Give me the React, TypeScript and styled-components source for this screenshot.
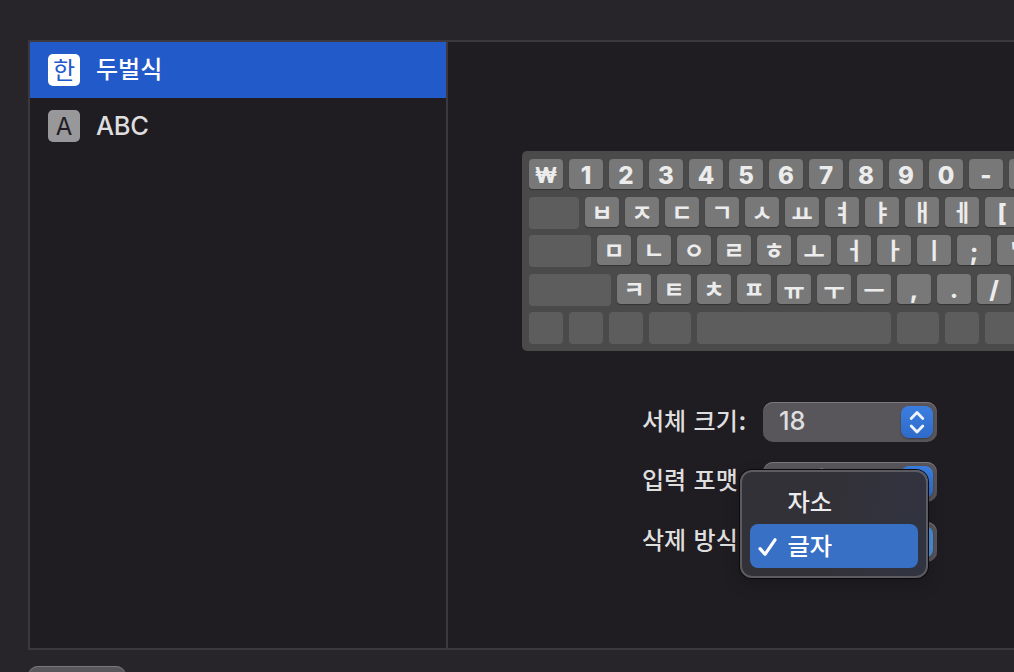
import React from "react";
import styled, { createGlobalStyle } from "styled-components";

const ROWS = [
  {
    lead: 0,
    keys: ["₩", "1", "2", "3", "4", "5", "6", "7", "8", "9", "0", "-", "="],
  },
  {
    lead: 50,
    keys: ["ㅂ", "ㅈ", "ㄷ", "ㄱ", "ㅅ", "ㅛ", "ㅕ", "ㅑ", "ㅐ", "ㅔ", "["],
  },
  {
    lead: 62,
    keys: ["ㅁ", "ㄴ", "ㅇ", "ㄹ", "ㅎ", "ㅗ", "ㅓ", "ㅏ", "ㅣ", ";", "'"],
  },
  {
    lead: 82,
    keys: ["ㅋ", "ㅌ", "ㅊ", "ㅍ", "ㅠ", "ㅜ", "ㅡ", ",", ".", "/"],
  },
];

const BOTTOM_ROW = [34, 34, 34, 42, 194, 42, 34, 34];

const isHangul = (label: string) => label >= "ㄱ" && label <= "ㅣ";

const keyOffset = (label: string) => {
  if (["ㅠ", "ㅜ", "ㅡ", "ㅛ", "ㅗ"].includes(label)) return 4;
  return isHangul(label) ? 2 : 3;
};

const keyFontSize = (label: string) => {
  if (label === "₩") return 21;
  return isHangul(label) ? 23 : 24;
};

const Chevrons = () => (
  <svg width="32" height="32" viewBox="0 0 32 32" fill="none">
    <path
      d="M10.2 12.4L16 6.5L21.8 12.4M10.2 20L16 25.9L21.8 20"
      stroke="#eef3fc"
      strokeWidth="2.8"
      strokeLinecap="round"
      strokeLinejoin="round"
    />
  </svg>
);

const Popup = ({ value, light }: { value?: string; light?: boolean }) => (
  <Select>
    <SelectValue>{value}</SelectValue>
    <Stepper $light={light}>
      <Chevrons />
    </Stepper>
  </Select>
);

const App = () => {
  return (
    <Window>
      <GlobalStyle />
      <Panel>
        <Sidebar>
          <Source $selected>
            <Badge $selected>한</Badge>
            <SourceName>두벌식</SourceName>
          </Source>
          <Source>
            <Badge>A</Badge>
            <SourceName $latin>ABC</SourceName>
          </Source>
        </Sidebar>
        <Content>
          <Keyboard>
            {ROWS.map((row) => (
              <KeyRow key={row.lead}>
                {row.lead > 0 && <BlankKey $width={row.lead} />}
                {row.keys.map((label) => (
                  <Key
                    key={label}
                    $hangul={isHangul(label)}
                    $offset={keyOffset(label)}
                    $size={keyFontSize(label)}
                  >
                    {label}
                  </Key>
                ))}
              </KeyRow>
            ))}
            <KeyRow>
              {BOTTOM_ROW.map((width, i) => (
                <BlankKey key={i} $width={width} />
              ))}
            </KeyRow>
          </Keyboard>
          <Form>
            <Field>
              <Label>
                서체 크기<Colon>:</Colon>
              </Label>
              <Popup value="18" />
            </Field>
            <Field>
              <Label>입력 포맷</Label>
              <Popup value="완성" />
            </Field>
            <Field>
              <Label>삭제 방식</Label>
              <Popup light />
              <Menu>
                <MenuItem>자소</MenuItem>
                <MenuItem $selected>
                  <Check width="20" height="20" viewBox="0 0 20 20" fill="none">
                    <path
                      d="M2 11.6L7 17.3L17 2.8"
                      stroke="#fff"
                      strokeWidth="3.2"
                      strokeLinecap="round"
                      strokeLinejoin="round"
                    />
                  </Check>
                  글자
                </MenuItem>
              </Menu>
            </Field>
          </Form>
        </Content>
      </Panel>
      <Footer>
        <FooterButton />
      </Footer>
    </Window>
  );
};

export default App;

const GlobalStyle = createGlobalStyle`
  * {
    box-sizing: border-box;
  }

  body {
    margin: 0;
    overflow: hidden;
    background: #27252a;
    color: #dfdedf;
    font-family: Inter, "Noto Sans CJK KR", sans-serif;
    font-weight: 500;
  }
`;

const Window = styled.div`
  display: flex;
  flex-direction: column;
  width: 1014px;
  height: 672px;
  padding: 40px 0 0 28px;
  overflow: hidden;
  background: #27252a;
`;

const Panel = styled.div`
  display: flex;
  flex-shrink: 0;
  height: 610px;
  border: 2px solid #3b393f;
  border-right: none;
  background: #1f1c22;
`;

const Sidebar = styled.div`
  flex-shrink: 0;
  width: 418px;
  border-right: 2px solid #3b393f;
`;

const Source = styled.div<{ $selected?: boolean }>`
  display: flex;
  align-items: center;
  gap: 16px;
  height: 56px;
  padding-left: 18px;
  background: ${({ $selected }) => ($selected ? "#225aca" : "transparent")};
  color: ${({ $selected }) => ($selected ? "#fff" : "#dfdedf")};
`;

const Badge = styled.div<{ $selected?: boolean }>`
  display: flex;
  justify-content: center;
  align-items: center;
  width: 32px;
  height: 32px;
  padding-top: 1px;
  border-radius: 5px;
  background: ${({ $selected }) => ($selected ? "#fff" : "#98979a")};
  color: ${({ $selected }) => ($selected ? "#225aca" : "#1f1c22")};
  font-size: 24px;
  font-weight: 400;
  line-height: 32px;
`;

const SourceName = styled.div<{ $latin?: boolean }>`
  font-size: ${({ $latin }) => ($latin ? 25.5 : 24)}px;
  letter-spacing: ${({ $latin }) => ($latin ? "-0.3px" : "normal")};
  line-height: 32px;
`;

const Content = styled.div`
  flex: 1;
  min-width: 0;
  padding: 109px 0 0 74px;
  overflow: hidden;
`;

const Keyboard = styled.div`
  display: flex;
  flex-direction: column;
  gap: 6.2px;
  width: 608px;
  height: 200px;
  padding: 8px 7px;
  border-radius: 5px;
  background: #4a4a4a;
`;

const KeyRow = styled.div`
  display: flex;
  flex-shrink: 0;
  gap: 6px;
  height: 32px;
`;

const Key = styled.div<{ $hangul: boolean; $offset: number; $size: number }>`
  display: flex;
  flex-shrink: 0;
  justify-content: center;
  align-items: center;
  width: 34px;
  height: 30px;
  padding-top: ${({ $offset }) => $offset}px;
  border-radius: 4px;
  background: #787878;
  box-shadow: 0 1px 1px #333;
  color: #ececec;
  font-size: ${({ $size }) => $size}px;
  font-weight: ${({ $hangul }) => ($hangul ? 700 : 800)};
  line-height: 30px;
`;

const BlankKey = styled.div<{ $width: number }>`
  flex-shrink: 0;
  width: ${({ $width }) => $width}px;
  height: 32px;
  border-radius: 4px;
  background: #5d5d5d;
`;

const Form = styled.div`
  display: flex;
  flex-direction: column;
  gap: 20px;
  margin: 51px 0 0 120px;
`;

const Field = styled.div`
  position: relative;
  display: flex;
  align-items: center;
  height: 40px;
`;

const Label = styled.div`
  width: 121px;
  padding-bottom: 2px;
  font-size: 24px;
  line-height: 36px;
  white-space: nowrap;
  word-spacing: 1px;
`;

const Colon = styled.span`
  margin-left: 0.5px;
  font-size: 26px;
  font-weight: 600;
`;

const Select = styled.div`
  display: flex;
  justify-content: space-between;
  align-items: center;
  width: 174px;
  height: 40px;
  padding: 0 4px 0 16px;
  border-radius: 10px;
  background: #58555b;
  box-shadow: inset 0 1px 0 #7a787c;
`;

const SelectValue = styled.div`
  padding-bottom: 2px;
  font-size: 25.5px;
  line-height: 36px;
`;

const Stepper = styled.div<{ $light?: boolean }>`
  width: 32px;
  height: 32px;
  border-radius: 8px;
  background: ${({ $light }) =>
    $light ? "#4a8fd8" : "linear-gradient(#3b7ee0, #2f6bc9)"};
  box-shadow: 0 1px 2px rgba(0, 0, 0, 0.3);
`;

const Menu = styled.div`
  position: absolute;
  top: -52px;
  left: 98px;
  width: 188px;
  height: 108px;
  padding: 8px;
  border: 2px solid #5c5b61;
  border-radius: 12px;
  background: linear-gradient(100deg, #333138 50%, #303441);
  box-shadow: 0 0 0 1px #0b0a0c, 0 6px 18px rgba(0, 0, 0, 0.2);
`;

const MenuItem = styled.div<{ $selected?: boolean }>`
  position: relative;
  height: 44px;
  padding-left: 37.5px;
  border-radius: 8px;
  background: ${({ $selected }) => ($selected ? "#3870c6" : "transparent")};
  color: ${({ $selected }) => ($selected ? "#fff" : "#ecebed")};
  font-size: 24.3px;
  line-height: 45px;
`;

const Check = styled.svg`
  position: absolute;
  top: 13px;
  left: 8px;
`;

const Footer = styled.div`
  padding-top: 16px;
`;

const FooterButton = styled.div`
  width: 98px;
  height: 40px;
  border-radius: 10px;
  background: #58555b;
  box-shadow: inset 0 1px 0 #7a787c;
`;
